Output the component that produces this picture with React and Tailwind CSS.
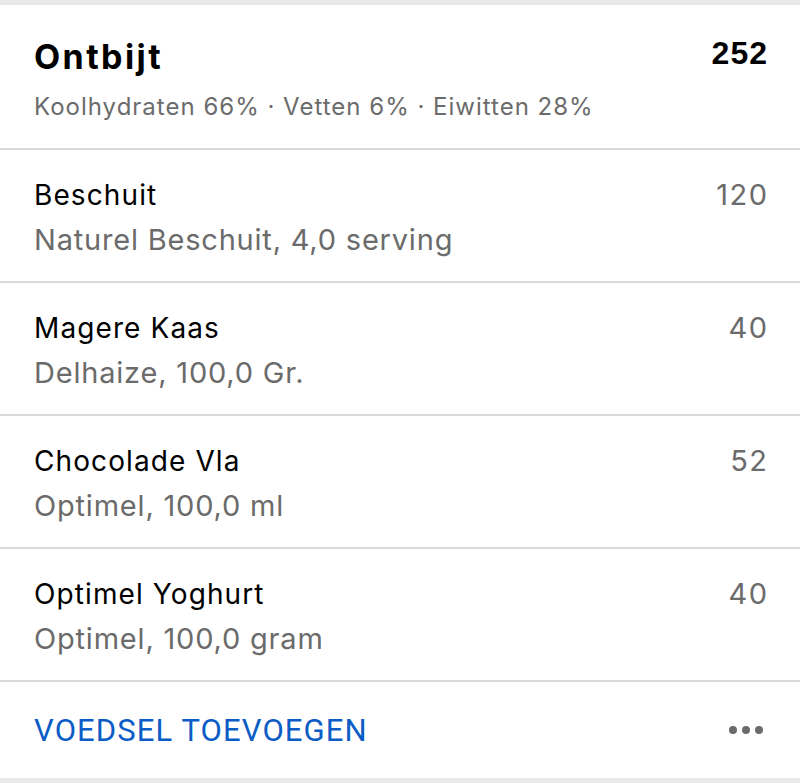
const items = [
  { name: "Beschuit", detail: "Naturel Beschuit, 4,0 serving", kcal: 120 },
  { name: "Magere Kaas", detail: "Delhaize, 100,0 Gr.", kcal: 40 },
  { name: "Chocolade Vla", detail: "Optimel, 100,0 ml", kcal: 52 },
  { name: "Optimel Yoghurt", detail: "Optimel, 100,0 gram", kcal: 40 },
];

const FoodRow = ({ item }) => (
  <div className="flex items-start justify-between border-b-2 border-[#d9d9d9] pl-[34px] pr-[33px] pt-[29px] pb-[24px]">
    <div className="flex flex-col">
      <span className="text-[28px] leading-[32px] tracking-[1.1px] text-black">{item.name}</span>
      <span className="mt-[12px] text-[29px] leading-[34px] tracking-[0.8px] text-[#6b6b6b]">
        {item.detail}
      </span>
    </div>
    <span className="-mr-[1.5px] text-[29px] leading-[32px] tracking-[1.5px] text-[#6b6b6b]">
      {item.kcal}
    </span>
  </div>
);

export default function App() {
  return (
    <div
      className="min-h-[783px] w-[800px] bg-[#e9e9eb] py-[5px]"
      style={{ fontFamily: "Inter, 'Noto Sans', sans-serif" }}
    >
      <div className="bg-white">
        {/* Meal header */}
        <div className="flex items-start justify-between border-b-2 border-[#d9d9d9] pl-[34px] pr-[33px] pt-[33px] pb-[28px]">
          <div className="flex flex-col">
            <span className="text-[34px] font-bold leading-[38px] tracking-[2.4px] text-black">
              Ontbijt
            </span>
            <span className="mt-[18px] text-[24px] leading-[26px] tracking-[1px] text-[#6b6b6b]">
              Koolhydraten 66% · Vetten 6% · Eiwitten 28%
            </span>
          </div>
          <span className="-mt-1 -mr-[1px] font-['Liberation_Sans',Arial,sans-serif] text-[32px] font-bold leading-[38px] tracking-[1px] text-black">
            252
          </span>
        </div>

        {items.map((item) => (
          <FoodRow key={item.name} item={item} />
        ))}

        {/* Footer */}
        <div className="flex h-[96px] items-center justify-between pl-[34px] pr-[37px]">
          <span className="font-['Roboto',sans-serif] text-[31px] leading-none tracking-[1.1px] text-[#0b5cc6]">
            VOEDSEL TOEVOEGEN
          </span>
          <svg width="34" height="8" viewBox="0 0 34 8" className="fill-[#6b6b6b]">
            <circle cx="4" cy="4" r="4" />
            <circle cx="17" cy="4" r="4" />
            <circle cx="30" cy="4" r="4" />
          </svg>
        </div>
      </div>
    </div>
  );
}
